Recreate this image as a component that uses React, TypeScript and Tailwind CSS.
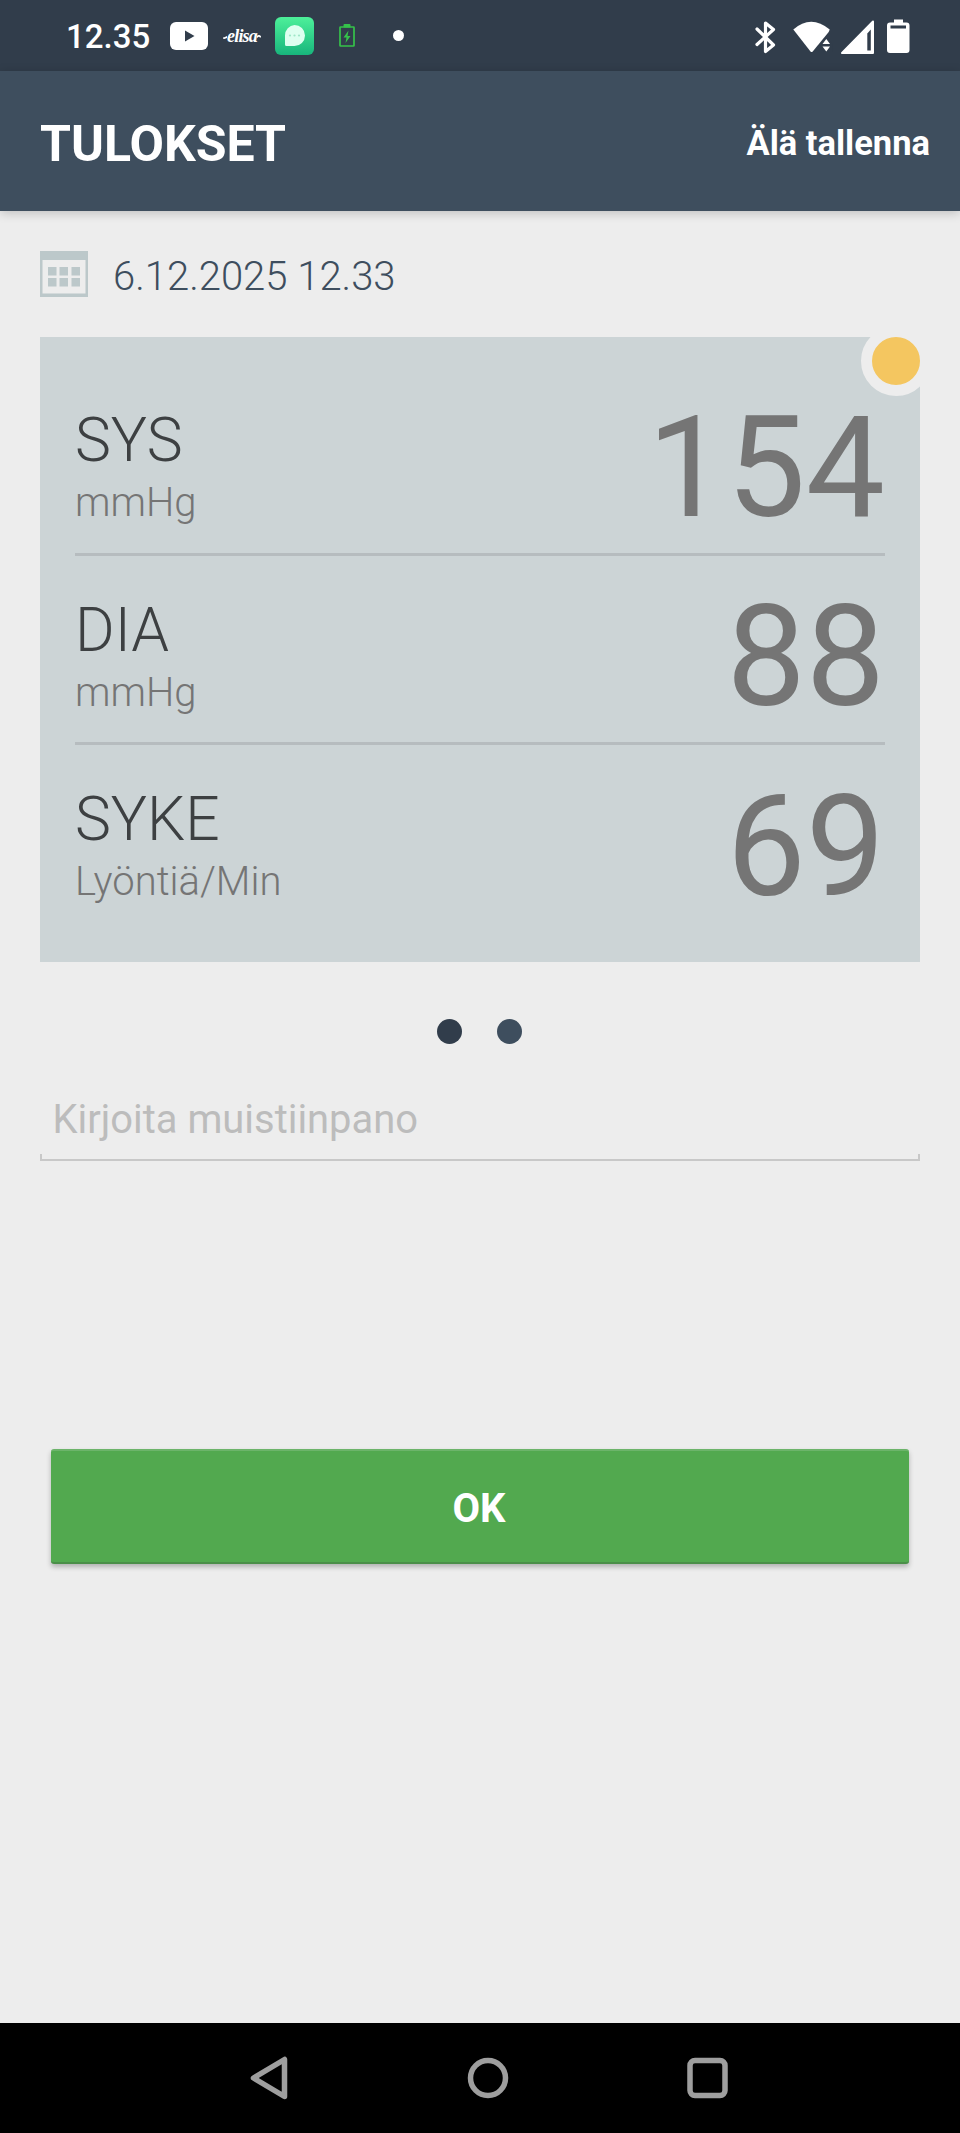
import React from "react";

type Reading = { label: string; unit: string; value: string };

const readings: Reading[] = [
  { label: "SYS", unit: "mmHg", value: "154" },
  { label: "DIA", unit: "mmHg", value: "88" },
  { label: "SYKE", unit: "Lyöntiä/Min", value: "69" },
];

function YoutubeIcon() {
  return (
    <svg className="ml-[21px] h-7 w-[38px]" viewBox="0 0 38 28">
      <rect width="38" height="28" rx="6" fill="#fff" />
      <path d="M15 8.5v11l9.5-5.5z" fill="#313d4b" />
    </svg>
  );
}

function ElisaLogo() {
  return (
    <div className="ml-[16px] flex h-6 w-9 items-center justify-center">
      <svg className="h-6 w-[4px] shrink-0" viewBox="0 0 4 24">
        <path d="M.8 14q1.800 .2 3.200-1" fill="none" stroke="#fff" strokeWidth="1.700" strokeLinecap="round" />
      </svg>
      <span className="whitespace-nowrap font-['Liberation_Serif',serif] text-[18px] font-bold italic leading-6 tracking-[-0.8px]">elisa</span>
      <svg className="h-6 w-[4px] shrink-0" viewBox="0 0 4 24">
        <path d="M0 13q2-2 3.300-.3" fill="none" stroke="#fff" strokeWidth="1.700" strokeLinecap="round" />
      </svg>
    </div>
  );
}

function MessageIcon() {
  return (
    <svg className="ml-[15px] h-[38px] w-[39px]" viewBox="0 0 39 38">
      <defs>
        <linearGradient id="msg" x1="0" y1="0" x2="0" y2="1">
          <stop offset="0" stopColor="#4df09a" />
          <stop offset="1" stopColor="#18b57c" />
        </linearGradient>
      </defs>
      <rect width="39" height="38" rx="6" fill="url(#msg)" />
      <path d="M19.500 8a10.500 10.500 0 1 1 0 21H11.500q-1.500 0-1.500-1.500V18.500A10 10.500 0 0 1 19.500 8z" fill="#defff0" />
      <g fill="#9fe6c8">
        <circle cx="15" cy="18.500" r="1.100" />
        <circle cx="19.500" cy="18.500" r="1.100" />
        <circle cx="24" cy="18.500" r="1.100" />
      </g>
    </svg>
  );
}

function ChargingIcon() {
  return (
    <svg className="ml-[25px] h-[23px] w-4" viewBox="0 0 16 23">
      <rect x="1" y="3" width="14" height="19" rx="0.500" fill="none" stroke="#35c24a" strokeWidth="1.700" />
      <rect x="4.500" y="0" width="7" height="3.500" rx="1" fill="#35c24a" />
      <path d="M9.500 6.500L4.500 13.500h3L6.500 19l5-7h-3z" fill="#35c24a" />
    </svg>
  );
}

function SystemIcons() {
  return (
    <svg className="ml-auto h-[36px] w-[160px]" viewBox="752 17 160 36">
      <path d="M757 28l16.500 16-8 6.500v-28.500l8 6.500-16.500 15" fill="none" stroke="#fff" strokeWidth="3.200" strokeLinejoin="round" strokeLinecap="round" />
      <path d="M793.300 28.500q17.700-15.500 36.400 0l-1 2.500-16 19.500q-1.200 1-2.200 0z" fill="#fff" />
      <path d="M820 44.500l6.500-8.500 6 7v8h-9z" fill="#313d4b" />
      <path d="M822.500 43h7.500l-3.700-5zM822.500 45.500h7.500l-3.700 5z" fill="#fff" />
      <path d="M842 52h31V20.500z" fill="#fff" stroke="#fff" strokeWidth="2" strokeLinejoin="round" />
      <path d="M867.300 49.500h3.500V28.500l-3.500 4z" fill="#313d4b" />
      <path d="M894 18.500h9v3h3.500a3 3 0 0 1 3 3v24.500a3 3 0 0 1-3 3H890a3 3 0 0 1-3-3V24.500a3 3 0 0 1 3-3h4z" fill="#fff" />
      <rect x="890.500" y="24.500" width="15.500" height="3" fill="#313d4b" />
    </svg>
  );
}

function StatusBar() {
  return (
    <div className="flex h-[71px] items-center bg-[#313d4b] pl-[66px] pr-12 text-white">
      <span className="w-[83px] pt-[2px] text-[33px] font-medium leading-[40px]">12.35</span>
      <YoutubeIcon />
      <ElisaLogo />
      <MessageIcon />
      <ChargingIcon />
      <span className="ml-[38px] size-[11px] rounded-full bg-white" />
      <SystemIcons />
    </div>
  );
}

function CalendarIcon() {
  return (
    <svg className="h-[46px] w-12" viewBox="0 0 48 46" fill="#bcc8ca">
      <path d="M0 0h48v46H0zM2.500 9v33.500h43V9z" fillRule="evenodd" />
      <path d="M8 16h8.500v8.500H8zM19.500 16H28v8.500h-8.500zM31.500 16H40v8.500h-8.500zM8 27h8.500v8.500H8zM19.500 27H28v8.500h-8.500zM31.500 27H40v8.500h-8.500z" />
    </svg>
  );
}

function ReadingRow({ label, unit, value }: Reading) {
  return (
    <div className="flex h-[189.5px] items-start justify-between">
      <div className="pt-[43px] font-light">
        <div className="text-[60.5px] leading-[64px] text-[#3d4042]">{label}</div>
        <div className="pt-[2px] text-[40px] leading-[56px] text-[#757575]">{unit}</div>
      </div>
      <div className="pt-[31.5px] text-[141px] leading-[140px] text-[#757575]">{value}</div>
    </div>
  );
}

export default function App() {
  return (
    <div className="flex h-[2133px] w-[960px] flex-col overflow-hidden bg-[#ededed] font-['Roboto',sans-serif]">
      <StatusBar />
      <header className="flex h-[140px] shrink-0 items-center justify-between bg-[#3e4e5e] pl-10 pr-[30px] font-bold text-white shadow-[0_2px_10px_rgba(0,0,0,0.2)]">
        <h1 className="pt-[5px] text-[50px] leading-none">TULOKSET</h1>
        <button className="pt-[4px] text-[34.5px] leading-none">Älä tallenna</button>
      </header>
      <main className="flex flex-1 flex-col px-10">
        <div className="mt-10 flex h-[46px] items-center gap-[25px]">
          <CalendarIcon />
          <span className="pt-[6px] text-[40px] font-light leading-none text-[#3e4e5e]">6.12.2025 12.33</span>
        </div>
        <section className="relative mt-10 h-[625px] overflow-hidden bg-[#ccd4d6] px-[35px] pt-[29px]">
          {readings.map((r, i) => (
            <React.Fragment key={r.label}>
              {i > 0 && <hr className="-mt-[3px] h-[3px] border-0 bg-[#b6bcbf]" />}
              <ReadingRow {...r} />
            </React.Fragment>
          ))}
          <span className="absolute -right-[11px] -top-[11px] size-[70px] rounded-full border-[11px] border-[#ededed] bg-[#f4c660]" />
        </section>
        <div className="mt-[57px] flex justify-center gap-[35px] pr-[2px]">
          <span className="size-[25px] rounded-full bg-[#313d4b]" />
          <span className="size-[25px] rounded-full bg-[#3e4e5e]" />
        </div>
        <div className="mt-[50px] flex h-[67px] flex-col justify-end">
          <span className="pl-[12.5px] text-[39.9px] leading-[48px] text-[#bcbcbc]">Kirjoita muistiinpano</span>
          <div className="mt-[10px] h-[7px] shrink-0 border-x-2 border-b-2 border-[#c8c8c8]" />
        </div>
        <button className="mx-[11px] mt-[288px] h-[115px] rounded-[3px] border-b-2 border-t-2 border-b-[#4b8f49] border-t-[#6cb46a] bg-[#52a94f] pr-[2px] pt-[4px] text-[40px] font-bold leading-none text-white shadow-[0_3px_5px_rgba(0,0,0,0.25)]">OK</button>
      </main>
      <nav className="flex h-[110px] shrink-0 items-center justify-center bg-black pl-[18px]">
        <svg className="h-[50px] w-[490px]" viewBox="244 2053 490 50" fill="none" stroke="#9e9e9e" strokeWidth="5.500" strokeLinejoin="round">
          <path d="M253.500 2078l31-18.500v37z" />
          <circle cx="488" cy="2078" r="17.500" />
          <rect x="690" y="2060.500" width="35" height="35" rx="5" />
        </svg>
      </nav>
    </div>
  );
}
